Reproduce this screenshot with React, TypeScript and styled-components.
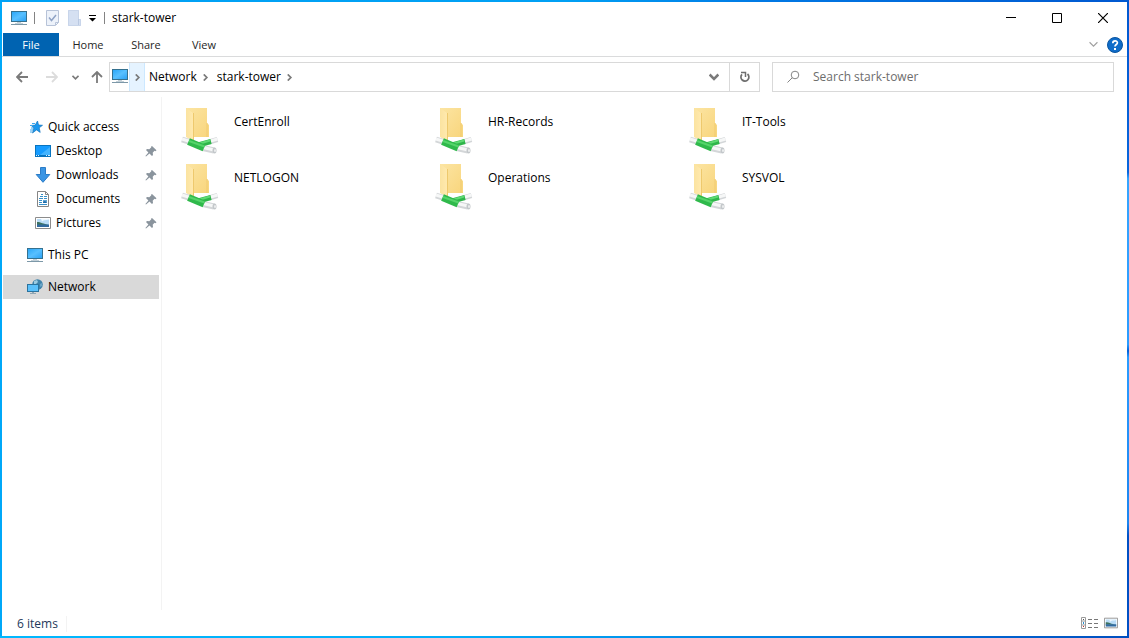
import React from "react";
import styled, { createGlobalStyle } from "styled-components";

const GlobalStyle = createGlobalStyle`
  *, *::before, *::after { box-sizing: border-box; }
  body { margin: 0; }
  body, button, input { font-family: "Open Sans", "Noto Sans", sans-serif; font-size: 12px; line-height: 16px; color: #000; }
  button { padding: 0; border: 0; background: none; }
  svg { display: block; flex: none; }
  ul { list-style: none; margin: 0; padding: 0; }
`;

const Frame = styled.div`
  min-height: 100vh;
  padding: 2px;
  display: flex;
  background:
    linear-gradient(90deg, #00a2f5 0%, #00a0f4 50%, #0078e4 68%, #0058d0 100%) top / 100% 2px no-repeat,
    linear-gradient(90deg, #00b8ff 0%, #00aef8 40%, #0078e0 75%, #004fc0 100%) bottom / 100% 2px no-repeat,
    linear-gradient(180deg, #0058d0 0%, #0866dc 27%, #36a5ff 28%, #2a9cff 54%, #0060d8 55%, #2a9cff 56%, #1c86f0 82%, #0050c4 84%, #0050c4 100%) right / 2px 100% no-repeat,
    #00a8f8;
`;

const Window = styled.div`
  flex: 1;
  min-width: 0;
  display: flex;
  flex-direction: column;
  background: #fff;
`;

const TitleBar = styled.header`
  height: 31px;
  display: flex;
  align-items: center;
  padding: 0 1px 0 9px;
`;

const QuickButton = styled.button<{ $gap?: number }>`
  display: flex;
  margin-left: ${(p) => p.$gap ?? 8}px;
`;

const Separator = styled.span<{ $gap: number }>`
  width: 1px;
  height: 12px;
  margin-left: ${(p) => p.$gap}px;
  background: #838383;
`;

const Title = styled.h1`
  flex: 1;
  margin: 0 0 0 7px;
  font-size: 12px;
  line-height: 16px;
  font-weight: 400;
`;

const CaptionButton = styled.button`
  width: 46px;
  height: 30px;
  display: grid;
  place-items: center;
`;

const Ribbon = styled.nav`
  height: 24px;
  display: flex;
  align-items: stretch;
  padding-right: 4px;
  border-bottom: 1px solid #dadbdc;
`;

const Tab = styled.button<{ $file?: boolean }>`
  width: ${(p) => (p.$file ? 56 : 58)}px;
  font-size: 11px;
  background: ${(p) => (p.$file ? "#0063b1" : "transparent")};
  color: ${(p) => (p.$file ? "#fff" : "#262626")};
  margin-left: ${(p) => (p.$file ? 1 : 0)}px;
`;

const RibbonEnd = styled.div`
  margin-left: auto;
  display: flex;
  align-items: center;
  gap: 9px;
`;

const IconButton = styled.button`
  display: grid;
  place-items: center;
`;

const AddressRow = styled.div`
  display: flex;
  align-items: center;
  height: 40px;
  padding: 0 13px 0 5px;
`;

const History = styled.div`
  flex: none;
  display: flex;
  align-items: center;
`;

const HistoryButton = styled.button<{ $width?: number }>`
  width: ${(p) => p.$width ?? 30}px;
  height: 24px;
  display: grid;
  place-items: center;
`;

const AddressBar = styled.div`
  flex: 649 1 0;
  height: 30px;
  display: flex;
  align-items: stretch;
  border: 1px solid #d9d9d9;
`;

const Place = styled.span`
  width: 19px;
  display: grid;
  align-items: center;
  padding: 0 0 2px 2px;
`;

const CrumbArrow = styled.button<{ $hot?: boolean }>`
  width: ${(p) => (p.$hot ? 16 : 15)}px;
  display: grid;
  place-items: center;
  background: ${(p) => (p.$hot ? "#e5f3ff" : "transparent")};
  border: solid ${(p) => (p.$hot ? "#cce8ff" : "transparent")};
  border-width: 0 1px;
`;

const Crumb = styled.button`
  padding: 0 1px 0 4px;
`;

const BarButton = styled.button<{ $push?: boolean; $line?: boolean }>`
  width: 30px;
  display: grid;
  place-items: center;
  margin-left: ${(p) => (p.$push ? "auto" : "0")};
  border-left: ${(p) => (p.$line ? "1px solid #d9d9d9" : "0")};
`;

const SearchBox = styled.label`
  flex: 316 1 0;
  height: 30px;
  margin-left: 12px;
  padding: 0 12px;
  display: flex;
  align-items: center;
  gap: 12px;
  border: 1px solid #d9d9d9;
`;

const SearchInput = styled.input`
  flex: 1;
  min-width: 0;
  padding: 0;
  border: 0;
  outline: 0;
  background: none;
  &::placeholder { color: #6d6d6d; opacity: 1; }
`;

const Body = styled.div`
  flex: 1;
  display: flex;
`;

const Sidebar = styled.nav`
  width: 160px;
  flex: none;
  padding: 18px 2px 0 1px;
  border-right: 1px solid #f3f3f3;
`;

const NavGroup = styled.ul`
  margin-bottom: 8px;
`;

const NavButton = styled.button<{ $child?: boolean; $selected?: boolean }>`
  width: 100%;
  height: 24px;
  display: flex;
  align-items: center;
  gap: 5px;
  padding: 0 2px 0 ${(p) => (p.$child ? 32 : 24)}px;
  text-align: left;
  background: ${(p) => (p.$selected ? "#d9d9d9" : "transparent")};
`;

const NavLabel = styled.span`
  flex: 1;
`;

const Content = styled.main`
  flex: 1;
  min-width: 0;
  padding: 10px 0 0 11px;
`;

const FolderGrid = styled.ul`
  display: grid;
  grid-template-columns: repeat(auto-fill, 254px);
  grid-auto-rows: 56px;
`;

const Folder = styled.button`
  display: flex;
  align-items: flex-start;
  gap: 9px;
  padding-left: 4px;
  text-align: left;
`;

const FolderName = styled.span`
  padding-top: 7px;
`;

const StatusBar = styled.footer`
  height: 26px;
  display: flex;
  align-items: center;
  padding: 2px 9px 0 15px;
  color: #1e395b;
`;

const ItemCount = styled.span`
  padding-right: 8px;
  border-right: 1px solid #f3f3f3;
`;

const ViewButtons = styled.div`
  margin-left: auto;
  display: flex;
  gap: 6px;
  padding-bottom: 2px;
`;

const Monitor = () => (
  <svg width="16" height="16" viewBox="0 0 16 16">
    <defs>
      <linearGradient id="screen" x1="0" y1="0" x2="1" y2="1">
        <stop offset="0" stopColor="#2aa7f8" />
        <stop offset=".5" stopColor="#58c0ff" />
        <stop offset="1" stopColor="#2ba2f5" />
      </linearGradient>
    </defs>
    <path fill="#35718f" d="M0 1h16v11H0z" />
    <path fill="url(#screen)" d="M1 2h14v9H1z" />
    <path fill="#c3d0d8" d="M6 12h4v1H6z" />
    <path fill="#c3d0d8" d="M4 13h8v1H4z" />
    <path fill="#7c98a8" d="M0 14h16v1H0z" />
  </svg>
);

const PropertiesIcon = () => (
  <svg width="13" height="16" viewBox="0 0 13 16">
    <path d="M.5.5h12v12l-3 3H.5z" fill="#edf2fa" stroke="#b7c3d8" />
    <path d="M9.500 15v-2.500h3" fill="none" stroke="#b7c3d8" />
    <path d="M3 7.500l2.500 3L10 5" fill="none" stroke="#8fa3c5" strokeWidth="1.500" />
  </svg>
);

const NewFolderIcon = () => (
  <svg width="13" height="16" viewBox="0 0 13 16">
    <path d="M0 0h11v9h2v7H0z" fill="#d5e0f2" />
    <path d="M.5.5h10v9h2v6H.5z" fill="none" stroke="#c8d5ea" />
    <path d="M10.500 9v6" stroke="#bac9e2" />
  </svg>
);

const Chevron = ({ right, size = 7, color = "#7a7a7a", weight = 2 }: { right?: boolean; size?: number; color?: string; weight?: number }) => (
  <svg width={size} height={size} viewBox="0 0 8 8">
    <path d={right ? "M2 .5L5.500 4 2 7.500" : "M.5 2L4 5.500 7.500 2"} fill="none" stroke={color} strokeWidth={weight} />
  </svg>
);

const Arrow = ({ turn = 0, color = "#7a7a7a" }: { turn?: number; color?: string }) => (
  <svg width="12" height="12" viewBox="0 0 12 12">
    <path d="M12 6H1M6 1L1 6l5 5" transform={`rotate(${turn} 6 6)`} fill="none" stroke={color} strokeWidth="1.800" />
  </svg>
);

const StarIcon = () => (
  <svg width="16" height="16" viewBox="0 0 16 16">
    <path d="M10.500 2l1 4 4 .3-3.300 2.500 1 4.600-3.700-2.500L5.500 14l1.300-5-2.600-2.600 4-.3z" fill="#1b98ee" stroke="#1675bd" strokeWidth=".7" />
    <path d="M5 4.500h3M3 6.500h3M4 9h2M3 11h3M3 13h2" stroke="#3ca8ef" />
  </svg>
);

const DesktopIcon = () => (
  <svg width="16" height="16" viewBox="0 0 16 16">
    <path fill="#0874bf" d="M0 2h16v12H0z" />
    <path fill="#169cff" d="M1 3h14v9H1z" />
    <path fill="#44b4ff" d="M15 4v8H5z" />
    <path d="M1 12.500h1M3 12.500h1M11 12.500h1M13 12.500h2" stroke="#d8f0ff" />
  </svg>
);

const DownloadIcon = () => (
  <svg width="16" height="16" viewBox="0 0 16 16">
    <path d="M5.500.5h5v7h4.300L8 15.300 1.200 7.500h4.300z" fill="#3a95e4" stroke="#2b7cc7" />
  </svg>
);

const DocumentIcon = () => (
  <svg width="16" height="16" viewBox="0 0 16 16">
    <path d="M2.500.5h8l3 3v12h-11z" fill="#fff" stroke="#858585" />
    <path d="M10.500.5v3h3" fill="none" stroke="#858585" />
    <path d="M6 3.500h2M5 5.500h3M9 5.500h3M4 7.500h4M9 7.500h3M4 9.500h3M4 11.500h3M4 13.500h8" stroke="#3790c8" />
    <path d="M8 9h4v3H8z" fill="#5fa5d2" />
    <path d="M8 11l2-1 2 2H8z" fill="#1d69a8" />
  </svg>
);

const PictureIcon = ({ width = 16 }: { width?: number }) => (
  <svg width={width} height="16" viewBox="0 0 16 16" preserveAspectRatio="xMidYMid meet">
    <path d="M.5 2.500h15v11H.5z" fill="#fff" stroke="#8c8c8c" />
    <path d="M2 4h12v8H2z" fill="#b9dcf7" />
    <path d="M2 7c4 0 6 2 12 3H2z" fill="#3d7260" />
    <path d="M2 9.500h12V12H2z" fill="#316aa0" />
    <path d="M7 6.500c2-2 4-1 7-2V4H6z" fill="#eef8ff" />
  </svg>
);

const NetworkIcon = () => (
  <svg width="16" height="16" viewBox="0 0 16 16">
    <circle cx="10.500" cy="5.500" r="5.300" fill="#3f83ab" />
    <path d="M7 2l3-1 1 2-2 2-2 0z" fill="#9bcbe2" />
    <path d="M13 5l2-1 0 3-2 1z" fill="#6ba6c7" />
    <path fill="#2b739e" d="M0 5h12v8H0z" />
    <path fill="#5ac0fb" d="M1 6h10v6H1z" />
    <path fill="#91a7b4" d="M5 13h2v1h2v1H3v-1h2z" />
  </svg>
);

const PinIcon = () => (
  <svg width="12" height="12" viewBox="0 0 12 12">
    <path d="M7 1l4.500 4.200-1 1-1-.4-1.800 1.900.3 2.200-1 1L4.500 8.500 1 11.500l-.6-.5 3-3.600L1 5l1-1 2.300.3 2-2L6 1.800z" fill="#8a949d" />
  </svg>
);

const FolderIcon = () => (
  <svg width="48" height="48" viewBox="0 0 48 48">
    <defs>
      <linearGradient id="folderBack" x1="0" y1="0" x2="1" y2="1">
        <stop offset="0" stopColor="#fce5a3" />
        <stop offset="1" stopColor="#f8d57c" />
      </linearGradient>
      <linearGradient id="folderFront" x1="0" y1="0" x2="1" y2="0">
        <stop offset="0" stopColor="#fbe3a0" />
        <stop offset="1" stopColor="#ffe9ae" />
      </linearGradient>
    </defs>
    <path d="M9 1h21v15l2 2v12H9z" fill="url(#folderBack)" />
    <path d="M30 16v14" stroke="#f0cb70" />
    <path d="M9 1l7 5v28l-7-4z" fill="url(#folderFront)" />
    <path d="M16.500 6v27" stroke="#eec96d" />
    <g fill="none" strokeLinecap="butt">
      <path d="M5 32.500l8 2.500" stroke="#d3d6d8" strokeWidth="6" />
      <path d="M5 32l8 2.500" stroke="#f6f7f7" strokeWidth="3" />
      <path d="M32 35l8.500-2.500" stroke="#d3d6d8" strokeWidth="5" />
      <path d="M32 34.500l8.500-2.500" stroke="#f6f7f7" strokeWidth="3" />
      <path d="M26 41l11 2.500" stroke="#d3d6d8" strokeWidth="6" />
      <path d="M26 40.500l11 2.500" stroke="#f6f7f7" strokeWidth="3" />
      <path d="M21 38l13-3.500" stroke="#2fb54a" strokeWidth="5" />
      <path d="M21 37l12-3.500" stroke="#5fda73" strokeWidth="2" />
      <path d="M11.500 34.500L27 41" stroke="#2fb94b" strokeWidth="7" />
      <path d="M12 34l15.500 5.500" stroke="#55d46a" strokeWidth="2" />
    </g>
    <ellipse cx="37.500" cy="43.500" rx="2" ry="3" fill="#c3c7ca" />
    <ellipse cx="38" cy="43.500" rx="1" ry="1.500" fill="#eceeef" />
  </svg>
);

const pinned = [
  { name: "Desktop", icon: <DesktopIcon /> },
  { name: "Downloads", icon: <DownloadIcon /> },
  { name: "Documents", icon: <DocumentIcon /> },
  { name: "Pictures", icon: <PictureIcon /> },
];

const folders = ["CertEnroll", "HR-Records", "IT-Tools", "NETLOGON", "Operations", "SYSVOL"];

export default function App() {
  return (
    <>
      <GlobalStyle />
      <Frame>
        <Window>
          <TitleBar>
            <Monitor />
            <Separator $gap={7} />
            <QuickButton $gap={11} aria-label="Properties"><PropertiesIcon /></QuickButton>
            <QuickButton $gap={9} aria-label="New folder"><NewFolderIcon /></QuickButton>
            <QuickButton aria-label="Customize Quick Access Toolbar">
              <svg width="7" height="8" viewBox="0 0 7 8"><path d="M0 1h7v1H0zM0 4h7L3.500 7.500z" /></svg>
            </QuickButton>
            <Separator $gap={8} />
            <Title>stark-tower</Title>
            <CaptionButton aria-label="Minimize">
              <svg width="10" height="10" viewBox="0 0 10 10"><path d="M0 4h10v1H0z" /></svg>
            </CaptionButton>
            <CaptionButton aria-label="Maximize">
              <svg width="10" height="10" viewBox="0 0 10 10"><path d="M.5.5h9v9h-9z" fill="none" stroke="#000" /></svg>
            </CaptionButton>
            <CaptionButton aria-label="Close">
              <svg width="10" height="10" viewBox="0 0 10 10"><path d="M0 0l10 10M10 0L0 10" stroke="#000" strokeWidth="1.200" /></svg>
            </CaptionButton>
          </TitleBar>
          <Ribbon>
            <Tab $file>File</Tab>
            <Tab>Home</Tab>
            <Tab>Share</Tab>
            <Tab>View</Tab>
            <RibbonEnd>
              <IconButton aria-label="Expand the Ribbon"><Chevron size={9} color="#a0a0a0" weight={1} /></IconButton>
              <IconButton aria-label="Help">
                <svg width="16" height="16" viewBox="0 0 16 16">
                  <circle cx="8" cy="8" r="7.500" fill="#0f6cc9" stroke="#0a55a0" />
                  <path d="M5.800 6.200c0-3 4.600-2.900 4.600-.4C10.400 7.500 8 7.500 8 9.600" fill="none" stroke="#fff" strokeWidth="1.700" />
                  <path d="M7 11h2v2H7z" fill="#fff" />
                </svg>
              </IconButton>
            </RibbonEnd>
          </Ribbon>
          <AddressRow>
            <History>
              <HistoryButton aria-label="Back"><Arrow /></HistoryButton>
              <HistoryButton aria-label="Forward"><Arrow turn={180} color="#dcdcdc" /></HistoryButton>
              <HistoryButton $width={17} aria-label="Recent locations"><Chevron /></HistoryButton>
              <HistoryButton $width={25} aria-label="Up"><Arrow turn={90} /></HistoryButton>
            </History>
            <AddressBar>
              <Place><Monitor /></Place>
              <CrumbArrow $hot aria-label="Show locations"><Chevron right /></CrumbArrow>
              <Crumb>Network</Crumb>
              <CrumbArrow aria-label="Network locations"><Chevron right /></CrumbArrow>
              <Crumb>stark-tower</Crumb>
              <CrumbArrow aria-label="stark-tower locations"><Chevron right /></CrumbArrow>
              <BarButton $push aria-label="Previous locations"><Chevron size={10} /></BarButton>
              <BarButton $line aria-label="Refresh">
                <svg width="12" height="12" viewBox="0 0 12 12">
                  <path d="M8.500 3A4 4 0 1 1 3 3.300" fill="none" stroke="#6e6e6e" strokeWidth="1.700" />
                  <path d="M2 1.500h4.500v4.500" fill="none" stroke="#6e6e6e" strokeWidth="1.500" />
                </svg>
              </BarButton>
            </AddressBar>
            <SearchBox>
              <svg width="16" height="16" viewBox="0 0 16 16">
                <circle cx="10" cy="6" r="3.800" fill="none" stroke="#858585" />
                <path d="M7.300 8.700L2.500 13.500" stroke="#858585" />
              </svg>
              <SearchInput aria-label="Search" placeholder="Search stark-tower" />
            </SearchBox>
          </AddressRow>
          <Body>
            <Sidebar>
              <NavGroup>
                <li><NavButton><StarIcon /><NavLabel>Quick access</NavLabel></NavButton></li>
                {pinned.map((p) => (
                  <li key={p.name}>
                    <NavButton $child>{p.icon}<NavLabel>{p.name}</NavLabel><PinIcon /></NavButton>
                  </li>
                ))}
              </NavGroup>
              <NavGroup>
                <li><NavButton><Monitor /><NavLabel>This PC</NavLabel></NavButton></li>
              </NavGroup>
              <NavGroup>
                <li><NavButton $selected><NetworkIcon /><NavLabel>Network</NavLabel></NavButton></li>
              </NavGroup>
            </Sidebar>
            <Content>
              <FolderGrid>
                {folders.map((name) => (
                  <li key={name}><Folder><FolderIcon /><FolderName>{name}</FolderName></Folder></li>
                ))}
              </FolderGrid>
            </Content>
          </Body>
          <StatusBar>
            <ItemCount>6 items</ItemCount>
            <ViewButtons>
              <IconButton aria-label="Details view">
                <svg width="17" height="14" viewBox="0 0 17 14">
                  <path d="M.5 1.500h4v11h-4zM.5 5h4M.5 9h4" fill="#fff" stroke="#9a9a9a" />
                  <path d="M2 3h1v1H2z" fill="#555" /><path d="M2 6h1v2H2z" fill="#2a8fd0" /><path d="M2 10h1v1H2z" fill="#c03030" />
                  <path d="M7 3.500h4M13 3.500h4M7 7.500h4M13 7.500h4M7 11.500h4M13 11.500h4" stroke="#777" />
                </svg>
              </IconButton>
              <IconButton aria-label="Large icons view"><PictureIcon width={14} /></IconButton>
            </ViewButtons>
          </StatusBar>
        </Window>
      </Frame>
    </>
  );
}
